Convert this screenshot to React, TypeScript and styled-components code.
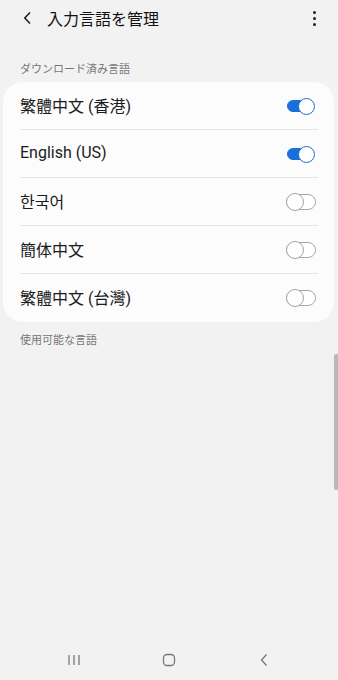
import React from "react";
import styled, { createGlobalStyle } from "styled-components";

const GlobalStyle = createGlobalStyle`
  html, body {
    margin: 0;
    padding: 0;
    background: #f2f2f2;
  }
  body {
    font-family: Roboto, "Noto Sans CJK JP", "Noto Sans CJK KR", sans-serif;
    color: #111;
  }
`;

const Screen = styled.div`
  position: relative;
  width: 338px;
  height: 680px;
  background: #f2f2f2;
  display: flex;
  flex-direction: column;
  overflow: hidden;
`;

const Header = styled.div`
  display: flex;
  align-items: center;
  height: 36px;
  padding: 0 18px 0 20px;
`;

const BackButton = styled.div`
  width: 14px;
  height: 16px;
  display: flex;
  align-items: center;
  justify-content: center;
  margin-right: 13px;
`;

const Title = styled.div`
  flex: 1;
  font-size: 16px;
  color: #111;
`;

const MoreButton = styled.div`
  width: 12px;
  display: flex;
  flex-direction: column;
  align-items: center;
  gap: 3px;
  span {
    width: 3px;
    height: 3px;
    border-radius: 50%;
    background: #222;
  }
`;

const SectionLabel = styled.div<{ $top: number }>`
  margin-top: ${(p) => p.$top}px;
  padding-left: 20px;
  font-size: 11px;
  color: #777;
  height: 16px;
  line-height: 16px;
`;

const Card = styled.div`
  margin: 4px 4px 0 3px;
  background: #fcfcfc;
  border-radius: 20px;
  padding: 0 16px 0 17px;
`;

const Row = styled.div<{ $last?: boolean }>`
  display: flex;
  align-items: center;
  justify-content: space-between;
  height: 48px;
  border-bottom: ${(p) => (p.$last ? "none" : "1px solid #e6e6e6")};
  box-sizing: border-box;
`;

const RowText = styled.div`
  font-size: 16px;
  color: #1a1a1a;
  margin-top: -2px;
`;

const Toggle = styled.div<{ $on: boolean }>`
  position: relative;
  width: 30px;
  height: 18px;
  margin-right: 2px;
  &::before {
    content: "";
    position: absolute;
    left: ${(p) => (p.$on ? "1px" : "0")};
    top: ${(p) => (p.$on ? "3px" : "1px")};
    width: ${(p) => (p.$on ? "27px" : "30px")};
    height: ${(p) => (p.$on ? "12px" : "16px")};
    box-sizing: border-box;
    border-radius: 8px;
    background: ${(p) => (p.$on ? "#1a6fd8" : "#fff")};
    border: 1.3px solid ${(p) => (p.$on ? "#1a6fd8" : "#a6a6a6")};
  }
  &::after {
    content: "";
    position: absolute;
    top: ${(p) => (p.$on ? "1px" : "0")};
    left: ${(p) => (p.$on ? "12px" : "0")};
    width: ${(p) => (p.$on ? "17px" : "18px")};
    height: ${(p) => (p.$on ? "17px" : "18px")};
    box-sizing: border-box;
    border-radius: 50%;
    background: #fff;
    border: 1.3px solid ${(p) => (p.$on ? "#1a6fd8" : "#a6a6a6")};
  }
`;

const Spacer = styled.div`
  flex: 1;
`;

const NavBar = styled.div`
  display: flex;
  justify-content: center;
  align-items: center;
  gap: 65px;
  height: 40px;
  margin-bottom: 0;
`;

const NavIcon = styled.div`
  width: 30px;
  display: flex;
  justify-content: center;
`;

const ScrollBar = styled.div`
  position: absolute;
  right: 0;
  top: 354px;
  width: 4px;
  height: 136px;
  border-radius: 2px 0 0 2px;
  background: #b9b9b9;
`;

const languages = [
  { name: "繁體中文 (香港)", on: true },
  { name: "English (US)", on: true },
  { name: "한국어", on: false },
  { name: "簡体中文", on: false },
  { name: "繁體中文 (台灣)", on: false },
];

export default function App() {
  return (
    <Screen>
      <GlobalStyle />
      <Header>
        <BackButton>
          <svg width="9" height="14" viewBox="0 0 9 14">
            <path d="M7 1.5 L1.8 7 L7 12.5" fill="none" stroke="#222" strokeWidth="1.6" />
          </svg>
        </BackButton>
        <Title>入力言語を管理</Title>
        <MoreButton>
          <span />
          <span />
          <span />
        </MoreButton>
      </Header>

      <SectionLabel $top={26}>ダウンロード済み言語</SectionLabel>
      <Card>
        {languages.map((l, i) => (
          <Row key={l.name} $last={i === languages.length - 1}>
            <RowText>{l.name}</RowText>
            <Toggle $on={l.on} />
          </Row>
        ))}
      </Card>
      <SectionLabel $top={11}>使用可能な言語</SectionLabel>

      <Spacer />
      <NavBar>
        <NavIcon>
          <svg width="14" height="12" viewBox="0 0 14 12">
            <path d="M2 1 V11 M7 1 V11 M12 1 V11" stroke="#777" strokeWidth="1.3" />
          </svg>
        </NavIcon>
        <NavIcon>
          <svg width="14" height="14" viewBox="0 0 14 14">
            <rect x="1.5" y="1.5" width="11" height="11" rx="3.5" fill="none" stroke="#777" strokeWidth="1.3" />
          </svg>
        </NavIcon>
        <NavIcon>
          <svg width="10" height="14" viewBox="0 0 10 14">
            <path d="M7.5 1.5 L2.5 7 L7.5 12.5" fill="none" stroke="#777" strokeWidth="1.3" />
          </svg>
        </NavIcon>
      </NavBar>
      <ScrollBar />
    </Screen>
  );
}
